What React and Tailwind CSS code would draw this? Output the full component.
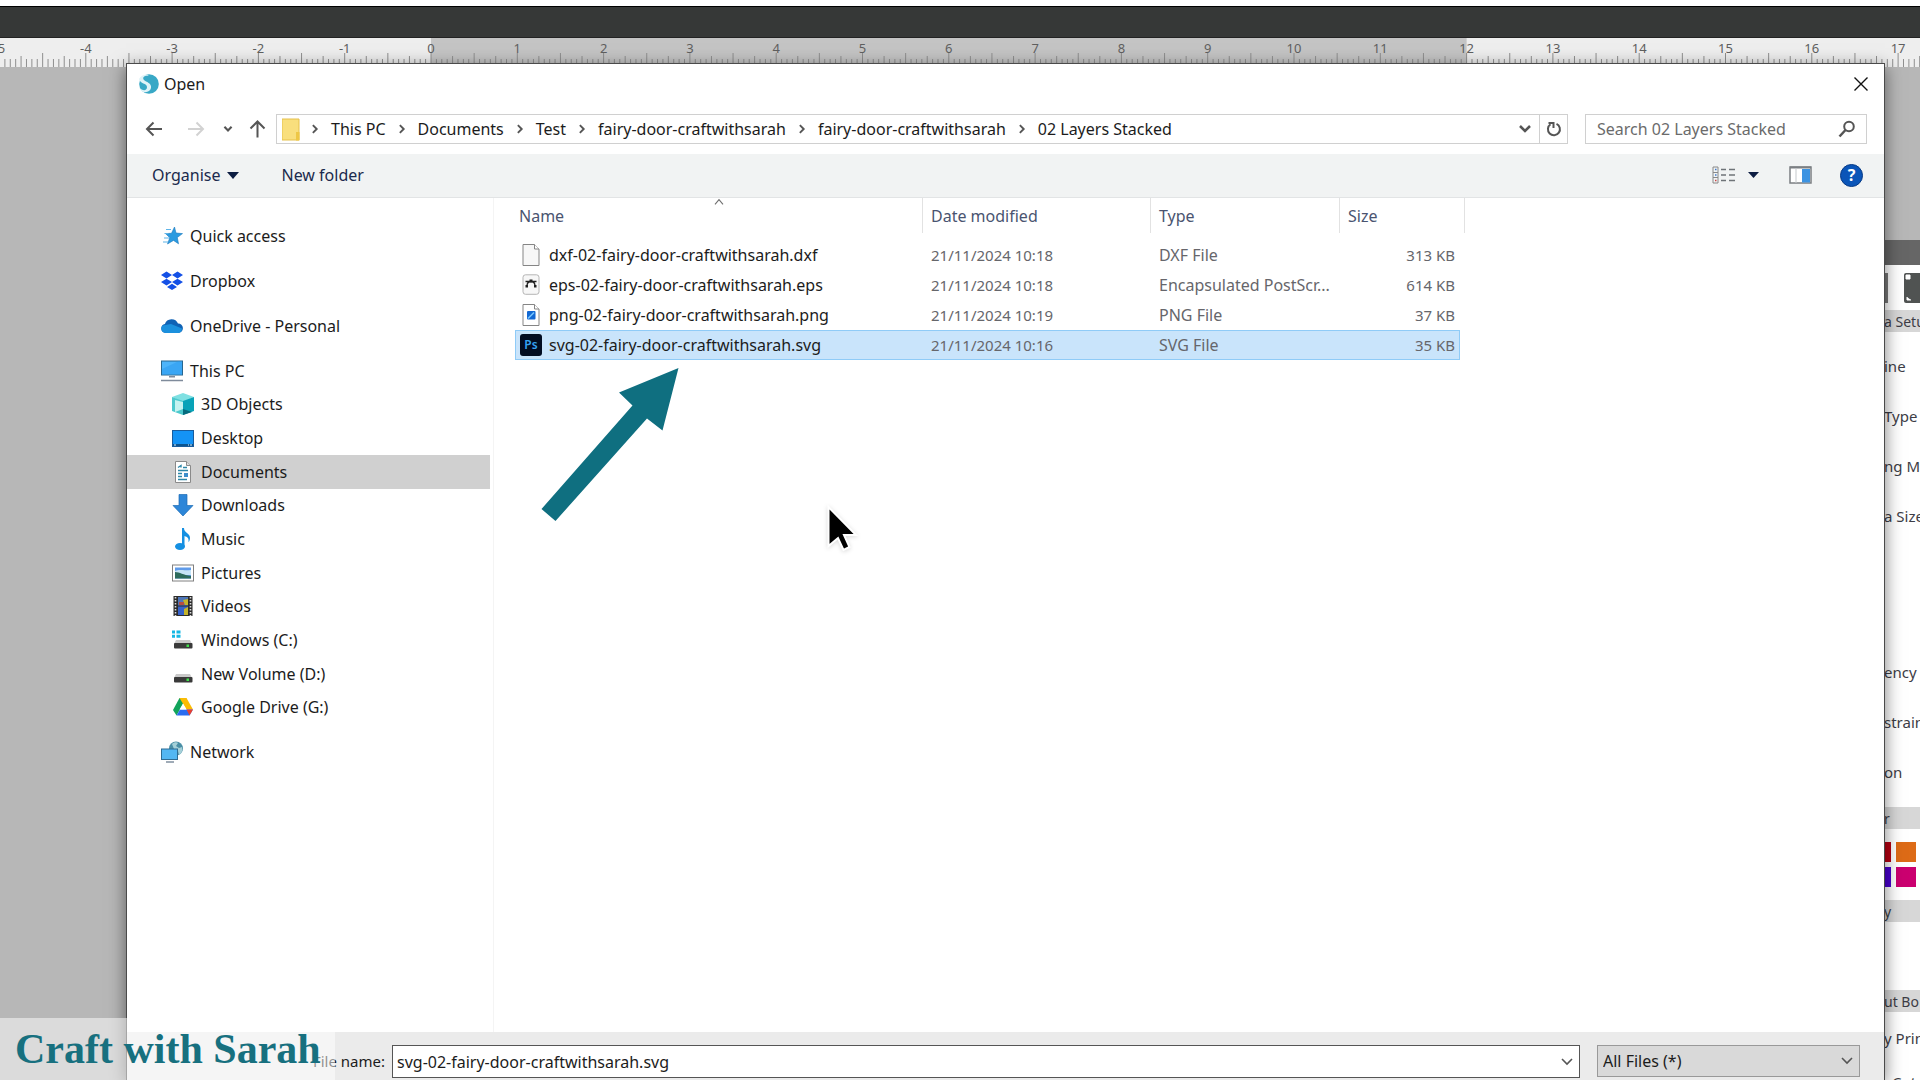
import React, { useState } from 'react';

const INCH = 86.3;
const ZERO = 431;

const files = [
  { name: 'dxf-02-fairy-door-craftwithsarah.dxf', date: '21/11/2024 10:18', type: 'DXF File', size: '313 KB', icon: 'blank' },
  { name: 'eps-02-fairy-door-craftwithsarah.eps', date: '21/11/2024 10:18', type: 'Encapsulated PostScr...', size: '614 KB', icon: 'eps' },
  { name: 'png-02-fairy-door-craftwithsarah.png', date: '21/11/2024 10:19', type: 'PNG File', size: '37 KB', icon: 'png' },
  { name: 'svg-02-fairy-door-craftwithsarah.svg', date: '21/11/2024 10:16', type: 'SVG File', size: '35 KB', icon: 'ps' },
];

const crumbs = ['This PC', 'Documents', 'Test', 'fairy-door-craftwithsarah', 'fairy-door-craftwithsarah', '02 Layers Stacked'];

const topPlaces = [
  { label: 'Quick access', icon: 'star' },
  { label: 'Dropbox', icon: 'dropbox' },
  { label: 'OneDrive - Personal', icon: 'cloud' },
];

const pcPlaces = [
  { label: '3D Objects', icon: 'cube' },
  { label: 'Desktop', icon: 'desktop' },
  { label: 'Documents', icon: 'document' },
  { label: 'Downloads', icon: 'download' },
  { label: 'Music', icon: 'music' },
  { label: 'Pictures', icon: 'picture' },
  { label: 'Videos', icon: 'video' },
  { label: 'Windows (C:)', icon: 'windrive' },
  { label: 'New Volume (D:)', icon: 'drive' },
  { label: 'Google Drive (G:)', icon: 'gdrive' },
];

const drive = (
  <>
    <path d="M4 11h14l2 4H2z" fill="#c9c9c9" />
    <rect x="2" y="14" width="18.500" height="5.500" rx="1" fill="#3a3a3a" />
    <rect x="14.500" y="15.500" width="2.500" height="2.500" fill="#3fe04a" />
  </>
);

const placeIcons = {
  star: (
    <>
      <path d="M13.500 2l1.500 6 6.500.6-5.200 3.900 1.200 6.300-5-3.400L6.500 19l2.300-6.300L4.500 8.600l6-.3z" fill="#2b9be0" stroke="#1978bd" strokeWidth=".6" />
      <path d="M5 4.500h5M3.500 8.500h4M3 13h5M2 17h5" stroke="#5fb4e8" strokeWidth="1.200" />
    </>
  ),
  dropbox: (
    <path fill="#1450e6" d="M5.500 1.500L11 5 5.500 8.400 0 5zM16.500 1.500L22 5l-5.500 3.400L11 5zM5.500 8.700L11 12.100 5.500 15.500 0 12.100zM16.500 8.700l5.500 3.400-5.500 3.400-5.500-3.400zM11 13.700l5 3.200-5 3.200-5-3.200z" />
  ),
  cloud: (
    <>
      <path d="M4.500 18a4.500 4.500 0 01-.6-8.900A7 7 0 0117 8.500a4.700 4.700 0 01.3 9.500z" fill="#0f62b5" />
      <path d="M4.500 18a4.500 4.500 0 01-3-7.600L10 9l11 4.500A4.600 4.600 0 0117.300 18z" fill="#1b90dd" />
    </>
  ),
  pc: (
    <>
      <rect x=".5" y="1" width="21" height="14" fill="#4db4fa" stroke="#28668f" />
      <path d="M1 14.500V9L17 1.500h4v13z" fill="#2f9df0" opacity=".6" />
      <path d="M8 16.700h6M0 20.500h22" stroke="#7f8b9b" strokeWidth="1.600" />
    </>
  ),
  cube: (
    <>
      <path d="M11 0l11 4-11 5L0 4z" fill="#7fe0e2" />
      <path d="M0 4l11 4v14L0 18z" fill="#4cc9cd" />
      <path d="M22 4L11 8v14l11-4z" fill="#08a3b8" />
      <path d="M3 7l8 2v7l-8 3z" fill="#c5f3f0" />
      <path d="M11 16l9 3-9 3z" fill="#066b7d" />
    </>
  ),
  desktop: (
    <>
      <rect x=".5" y="3.500" width="21" height="16" fill="#1493f5" stroke="#1a5c9c" />
      <path d="M1 18h20" stroke="#0c548f" strokeWidth="2" />
      <path d="M2 18h2M16 18h1M18 18h2" stroke="#d5efff" />
    </>
  ),
  document: (
    <>
      <path d="M3.500.5h11l4 4v17h-15z" fill="#fff" stroke="#8a8a8a" />
      <path d="M14.500.5v4h4" fill="#ddd" stroke="#8a8a8a" />
      <path d="M6 6.500l3-2v2M11 6.500h4M6 9.500h10M6 12.500h4M6 15.500h4M6 18.500h9" stroke="#2d87a8" strokeWidth="1.400" fill="none" />
      <rect x="12" y="12" width="4" height="4" fill="#3d8ecb" />
    </>
  ),
  download: <path d="M7 .5h8v11h6L11 22 1 11.500h6z" fill="#2d86d8" stroke="#1c6bb5" strokeWidth=".7" />,
  music: (
    <>
      <path d="M10 0h2c0 5 6 5 6 10 0 2-1 4-1.500 4 .5-4-1-5-4-6v10h-2.500z" fill="#1590e2" />
      <ellipse cx="8" cy="18.500" rx="5" ry="3.500" fill="#1590e2" />
    </>
  ),
  picture: (
    <>
      <rect x=".5" y="3" width="21" height="16" fill="#fff" stroke="#808080" />
      <rect x="3" y="5.500" width="16" height="11" fill="#5f9bea" />
      <path d="M3 9c5-2 8 0 16-1v5H3z" fill="#c6e4f8" />
      <path d="M3 10c5 0 8 3 16 4v2.500H3z" fill="#2d6b5c" />
    </>
  ),
  video: (
    <>
      <rect x="1.500" y="1" width="19" height="20" fill="#2b2b2b" />
      <path d="M3.500 2v19M18.500 2v19" stroke="#ddd" strokeWidth="1.600" strokeDasharray="1.500 1.500" />
      <rect x="6" y="2" width="10" height="8.500" fill="#4e76b8" />
      <rect x="6" y="11.500" width="10" height="8.500" fill="#3561c8" />
      <path d="M7 7h5v3H7z" fill="#b54b42" />
      <path d="M11 5l5-1v6h-3zM12 14l4-2v8h-4z" fill="#c4b32a" />
    </>
  ),
  windrive: (
    <>
      <path d="M0 1.500h3v3H0zM4.500 1.500h4v3h-4zM0 5.700h3v3H0zM4.500 5.700h4v3h-4z" fill="#16b8e4" />
      {drive}
    </>
  ),
  drive,
  gdrive: (
    <>
      <path d="M7.500 2h7L4.500 19.500 1 14z" fill="#12a45b" />
      <path d="M7.500 2h7L21 13.500h-6.500z" fill="#fbbc04" />
      <path d="M4.500 19.500L8 13.500h13L17.500 19.500z" fill="#2a6cf0" />
      <path d="M14.500 13.500H21l-3.500 6z" fill="#e8402f" />
      <path d="M11 7.500l3.500 6h-7z" fill="#fff" />
    </>
  ),
  network: (
    <>
      <circle cx="15" cy="7.500" r="7" fill="#4a8fa6" />
      <path d="M11 3c2-2 5-2 6-1l-2 3 3 2 3-1c1 4-1 7-3 8l-1-4-4-2z" fill="#a5d0d8" />
      <rect x=".5" y="8" width="16" height="10.500" fill="#53b7f2" stroke="#2e6c93" />
      <path d="M5 21h8" stroke="#8796a5" strokeWidth="1.600" />
    </>
  ),
};

function PlaceIcon({ name }) {
  return (
    <svg viewBox="0 0 22 22" className="size-[22px] shrink-0" aria-hidden="true">
      {placeIcons[name]}
    </svg>
  );
}

function FileIcon({ name }) {
  if (name === 'ps') {
    return (
      <span className="flex size-[22px] shrink-0 items-center justify-center rounded-[3px] bg-[#020d22] text-[12px] leading-none font-semibold text-[#35a3f5]">
        Ps
      </span>
    );
  }
  return (
    <svg viewBox="0 0 22 22" className="size-[22px] shrink-0" aria-hidden="true">
      {name === 'eps' ? (
        <>
          <rect x="3" y=".8" width="16" height="19.500" rx="2.500" fill="#f7f7f7" stroke="#b5b5b5" />
          <path d="M5.500 7.500h11M7 12c0-3 1.500-4.500 4-4.500s4 1.500 4 4.500" fill="none" stroke="#222" strokeWidth="1.300" />
          <path d="M9.500 5.500h3v3h-3zM5.500 11h2.500v2.500H5.500zM14 11h2.500v2.500H14z" fill="#222" />
        </>
      ) : (
        <>
          <path d="M3 .5h11.500L19 5v16.500H3z" fill={name === 'png' ? '#fff' : '#f7f7f7'} stroke="#858585" />
          <path d="M14.500.5V5H19" fill="#fff" stroke="#858585" />
        </>
      )}
      {name === 'png' && (
        <>
          <rect x="7" y="7" width="8.500" height="8.500" rx="1" fill="#1268d3" />
          <path d="M8 14.500l6-6" stroke="#76c6ff" strokeWidth="1.600" />
        </>
      )}
    </svg>
  );
}

function Chevron({ className, d = 'M2 4l5 5 5-5', width = 2 }) {
  return (
    <svg viewBox="0 0 14 14" className={className} fill="none" stroke="currentColor" strokeWidth={width} aria-hidden="true">
      <path d={d} />
    </svg>
  );
}

function Ruler() {
  const ticks = [];
  for (let i = -80; i <= 280; i++) {
    let top = 21;
    if (i % 4 === 0) top = 18;
    if (i % 8 === 0) top = 15;
    ticks.push(<path key={i} d={`M${ZERO + (i * INCH) / 16} ${top}V29`} />);
  }
  const labels = [];
  for (let n = -5; n <= 17; n++) labels.push(n);
  return (
    <svg className="block h-[29px] w-full shrink-0 bg-[#eeeeee]">
      <rect x={ZERO} y="0" width={INCH * 12} height="29" fill="#c4c4c4" />
      <g stroke="#8f8f8f" strokeWidth="1">{ticks}</g>
      <g fill="#5f5f5f" fontSize="13" textAnchor="middle">
        {labels.map((n) => (
          <text key={n} x={ZERO + n * INCH} y="15">{n}</text>
        ))}
      </g>
    </svg>
  );
}

function PanelHeader({ children }) {
  return <div className="h-[22px] bg-[#d7d7d7] text-[14px] leading-6">{children}</div>;
}

// Settings panel at the right of the workspace, mostly behind the dialog
function SidePanel() {
  return (
    <aside className="w-9 shrink-0 overflow-hidden bg-white text-[15px] whitespace-nowrap text-[#3d3d46]">
      <div className="h-[173px] bg-[#b7b7b7]" />
      <div className="h-[25px] bg-[#666666]" />
      <div className="flex h-[45px] items-center gap-4">
        <div className="h-[30px] w-1 shrink-0 bg-[#777777]" />
        <svg viewBox="0 0 30 30" className="size-[30px] shrink-0">
          <rect width="30" height="30" rx="2" fill="#505352" />
          <path d="M2 2h4v4H2zM3 24v3h4" fill="#fff" stroke="#fff" />
        </svg>
      </div>
      <PanelHeader>a Setu</PanelHeader>
      <div className="pt-[9px] leading-[50px]">
        <div>ine</div>
        <div>Type</div>
        <div>ng M</div>
        <div>a Size</div>
      </div>
      <div className="mt-[106px] mb-[10px] leading-[50px]">
        <div>ency</div>
        <div>strain</div>
        <div>on</div>
      </div>
      <PanelHeader>r</PanelHeader>
      <div className="grid grid-cols-[7px_20px] gap-x-[5px] gap-y-[5px] py-[13px]">
        <div className="h-5 bg-[#b80012]" />
        <div className="h-5 bg-[#dd6b17]" />
        <div className="h-5 bg-[#4a00d0]" />
        <div className="h-5 bg-[#cb0070]" />
      </div>
      <PanelHeader>y</PanelHeader>
      <div className="h-[68px]" />
      <PanelHeader>ut Bo</PanelHeader>
      <div className="pt-1 leading-[44px]">
        <div>y Prin</div>
        <div className="pl-2">Cut</div>
      </div>
    </aside>
  );
}

function AddressRow() {
  return (
    <div className="flex h-[30px] items-center pr-[17px] pl-[18px]">
      <div className="flex w-[131px] shrink-0 items-center text-[#555555]">
        <button aria-label="Back" className="mr-6 w-[18px]">
          <svg viewBox="0 0 18 18" className="size-[18px]" fill="none" stroke="currentColor" strokeWidth="2"><path d="M17 9H2M8.500 2.500L2 9l6.500 6.500" /></svg>
        </button>
        <button aria-label="Forward" className="mr-[18px] w-[18px] text-[#d2d2d2]">
          <svg viewBox="0 0 18 18" className="size-[18px]" fill="none" stroke="currentColor" strokeWidth="2"><path d="M1 9h15M9.500 2.500L16 9l-6.500 6.500" /></svg>
        </button>
        <button aria-label="Recent locations" className="mr-4">
          <Chevron className="size-[10px]" width={3} />
        </button>
        <button aria-label="Up">
          <svg viewBox="0 0 18 18" className="size-[18px]" fill="none" stroke="currentColor" strokeWidth="2"><path d="M8.500 17.500V2M1.500 8.500l7-7 7 7" /></svg>
        </button>
      </div>
      <div className="flex h-[30px] min-w-0 flex-1 items-center border border-[#d0d0d0] pl-[5px]">
        <svg viewBox="0 0 18 23" className="mr-[9px] h-[23px] w-[18px] shrink-0">
          <path d="M0 1h17v21H0z" fill="#f9df7d" stroke="#e6c14d" />
          <path d="M14 14h3.500v8.500H14z" fill="#eec746" />
        </svg>
        <nav className="flex min-w-0 flex-1 items-center whitespace-nowrap">
          {crumbs.map((c, i) => (
            <React.Fragment key={i}>
              <Chevron className="mr-[10px] size-3 shrink-0 text-[#555555]" d="M4.500 2.500L9 7l-4.500 4.500" width={2.2} />
              <a href="#" className="mr-[10px]">{c}</a>
            </React.Fragment>
          ))}
        </nav>
        <button aria-label="Previous locations" className="mr-[7px] text-[#555555]"><Chevron className="size-[14px]" width={2.5} /></button>
        <button aria-label="Refresh" className="flex h-full w-7 items-center justify-center border-l border-[#d0d0d0] text-[#555555]">
          <svg viewBox="0 0 16 16" className="size-4" fill="none" stroke="currentColor" strokeWidth="2">
            <path d="M10.500 2.800a6 6 0 11-6 .5M2.500 2h5v5" />
          </svg>
        </button>
      </div>
      <label className="ml-[17px] flex h-[30px] w-[282px] shrink-0 items-center border border-[#d0d0d0] pr-[10px] pl-[11px]">
        <input aria-label="Search" placeholder="Search 02 Layers Stacked" className="min-w-0 flex-1 outline-none placeholder:text-[#6b6b6b]" />
        <svg viewBox="0 0 18 18" className="size-[18px]" fill="none" stroke="#555555" strokeWidth="2">
          <circle cx="11" cy="6.500" r="4.800" />
          <path d="M7.500 10L1.500 16.500" strokeWidth="2.500" />
        </svg>
      </label>
    </div>
  );
}

function Toolbar() {
  return (
    <div className="mt-[10px] flex h-11 items-center border-b border-[#e2e4e5] bg-[#f1f3f3] pr-[21px] pb-px pl-[25px] text-[#1b2a4d]">
      <button className="flex items-center gap-[7px]">
        Organise
        <svg viewBox="0 0 12 7" className="h-[7px] w-3"><path d="M0 0h12L6 7z" fill="#0d1d42" /></svg>
      </button>
      <button className="ml-[42px]">New folder</button>
      <button aria-label="Change view" className="ml-auto">
        <svg viewBox="0 0 24 18" className="h-[18px] w-6" fill="none">
          <path d="M1 1h5v16H1zM1 6.500h5M1 11.500h5" stroke="#888" />
          <path d="M3 3.500h1.500M3 9h1.500" stroke="#3f78c9" strokeWidth="1.500" />
          <path d="M3 14.500h1.500" stroke="#c44" strokeWidth="1.500" />
          <path d="M9 3.500h5M17 3.500h6M9 9h5M17 9h6M9 14.500h5M17 14.500h6" stroke="#6f7478" strokeWidth="1.300" />
        </svg>
      </button>
      <button aria-label="More views" className="ml-3">
        <svg viewBox="0 0 11 6" className="h-1.5 w-[11px]"><path d="M0 0h11L5.500 6z" fill="#0d1d42" /></svg>
      </button>
      <button aria-label="Preview pane" className="ml-[30px]">
        <svg viewBox="0 0 23 18" className="h-[18px] w-[23px]">
          <rect x="1" y="1" width="21" height="16" fill="#fff" stroke="#7b7f83" strokeWidth="1.500" />
          <path d="M1 1.500h21" stroke="#7b7f83" strokeWidth="2" />
          <path d="M7 2v15" stroke="#c5c9cc" />
          <rect x="13" y="3" width="8" height="13.500" fill="#3c93e2" />
        </svg>
      </button>
      <button aria-label="Help" className="ml-7 flex size-[23px] items-center justify-center rounded-full border border-[#063a86] bg-[#0b55b8] leading-none font-bold text-white">
        ?
      </button>
    </div>
  );
}

function Places() {
  return (
    <aside className="w-[367px] shrink-0 border-r border-[#f4f4f4] pt-[21px] pr-[3px]">
      <div className="flex flex-col gap-[11px]">
        {topPlaces.map((p) => (
          <a key={p.label} href="#" className="flex h-[34px] items-center gap-[7px] pl-[34px]">
            <PlaceIcon name={p.icon} />
            {p.label}
          </a>
        ))}
        <div className="flex h-[370px] flex-col">
          <a href="#" className="flex flex-1 items-center gap-[7px] pl-[34px]">
            <PlaceIcon name="pc" />
            This PC
          </a>
          {pcPlaces.map((p) => (
            <a
              key={p.label}
              href="#"
              className={`flex flex-1 items-center gap-[7px] pl-[45px] ${p.label === 'Documents' ? 'bg-[#d0d0d0]' : ''}`}
            >
              <PlaceIcon name={p.icon} />
              {p.label}
            </a>
          ))}
        </div>
        <a href="#" className="flex h-[34px] items-center gap-[7px] pl-[34px]">
          <PlaceIcon name="network" />
          Network
        </a>
      </div>
    </aside>
  );
}

function FileTable({ selected, onSelect }) {
  return (
    <table className="ml-[21px] w-[950px] table-fixed border-separate border-spacing-0 self-start text-left">
      <colgroup>
        <col className="w-[408px]" />
        <col className="w-[228px]" />
        <col className="w-[189px]" />
        <col className="w-[120px]" />
        <col className="w-[5px]" />
      </colgroup>
      <thead className="text-[#4a5470]">
        <tr className="h-[35px]">
          <th className="relative border-r border-[#e2e2e2] pl-1 font-normal">
            Name
            <Chevron className="absolute top-0 left-1/2 h-2 w-3 -translate-x-1/2 text-[#707070]" d="M0 11l7-8 7 8" />
          </th>
          <th className="border-r border-[#e2e2e2] pl-2 font-normal">Date modified</th>
          <th className="border-r border-[#e2e2e2] pl-2 font-normal">Type</th>
          <th colSpan={2} className="border-r border-[#e2e2e2] pl-2 font-normal">Size</th>
        </tr>
      </thead>
      <tbody className="text-[#66666b] before:block before:h-[7px]">
        {files.map((f) => {
          const on = f.name === selected;
          const cell = on ? 'border-y border-[#8fcbf7] bg-[#c9e4fb]' : 'border-y border-transparent';
          return (
            <tr key={f.name} className="h-[30px]" onClick={() => onSelect(f.name)}>
              <td className={`${cell} border-l pl-1`}>
                <div className="flex items-center gap-[7px] text-[#1c1c1c]">
                  <FileIcon name={f.icon} />
                  {f.name}
                </div>
              </td>
              <td className={`${cell} pl-2 text-[15px]`}>{f.date}</td>
              <td className={`${cell} pl-2 whitespace-nowrap`}>{f.type}</td>
              <td className={`${cell} border-r pr-1 text-right text-[15px]`}>{f.size}</td>
              <td></td>
            </tr>
          );
        })}
      </tbody>
    </table>
  );
}

function App() {
  const [selected, setSelected] = useState(files[3].name);

  return (
    <div className="relative flex h-screen flex-col overflow-hidden bg-[#b7b7b7] font-['Noto_Sans',sans-serif] text-[16px] leading-5 text-[#1c1c1c]">
      {/* Workspace behind the dialog */}
      <div className="h-1.5 shrink-0 bg-white" />
      <div className="h-8 shrink-0 border-y border-t-black border-b-[#222222] bg-[#363837]" />
      <Ruler />
      <div className="flex min-h-0 flex-1 justify-end">
        <SidePanel />
      </div>

      {/* Open dialog */}
      <div role="dialog" aria-label="Open" className="absolute top-[63px] right-[35px] bottom-0 left-[126px] flex flex-col border-x border-t border-[#4a4a4a] bg-white shadow-[0_4px_16px_rgba(0,0,0,0.5)]">
        <div className="flex h-[50px] shrink-0 items-center pr-4 pb-[10px] pl-3">
          <svg viewBox="0 0 20 20" className="size-5">
            <circle cx="10" cy="10" r="9.800" fill="#38a8c6" />
            <path d="M0 5c3-5 8-5 10-3-5-1-7 2-5 4s8 3 7 8-9 6-12 0c4 3 8 3 8-1S1 10 0 5z" fill="#dff3f8" />
          </svg>
          <h1 className="ml-[5px]">Open</h1>
          <button aria-label="Close" className="ml-auto">
            <svg viewBox="0 0 14 14" className="size-[14px]" stroke="#111" strokeWidth="1.400"><path d="M.5.5l13 13M13.500.5l-13 13" /></svg>
          </button>
        </div>
        <AddressRow />
        <Toolbar />
        <div className="flex min-h-0 flex-1">
          <Places />
          <FileTable selected={selected} onSelect={setSelected} />
        </div>
        <div className="flex h-12 shrink-0 items-start bg-[#ebebeb] pt-[13px] pr-6">
          <label htmlFor="file-name" className="w-[258px] shrink-0 text-right text-[15px] leading-[33px]">File name:</label>
          <div className="ml-[7px] flex h-[33px] flex-1 items-center border border-[#555555] bg-white pr-[5px] pl-1">
            <input id="file-name" value={selected} readOnly className="min-w-0 flex-1 outline-none" />
            <button aria-label="File history" className="text-[#555555]"><Chevron className="size-[14px]" width={1.6} /></button>
          </div>
          <div className="relative ml-[17px] w-[263px] shrink-0 text-[#1c1c1c]">
            <select aria-label="File type" className="h-8 w-full appearance-none border border-[#999999] bg-[#d9d9d9] pl-[5px]">
              <option>All Files (*)</option>
            </select>
            <Chevron className="pointer-events-none absolute top-[9px] right-[6px] size-[14px] text-[#555555]" width={1.6} />
          </div>
        </div>
      </div>

      {/* Annotation arrow */}
      <svg viewBox="0 0 138 155" className="pointer-events-none absolute top-[367px] left-[541px] h-[155px] w-[138px]">
        <path d="M137.500 1L78 25.500l13.500 13L.5 142l14 12L106 51.500l15.500 12z" fill="#0f6f80" />
      </svg>

      {/* Mouse pointer */}
      <svg viewBox="0 0 34 50" className="pointer-events-none absolute top-[503px] left-[826px] h-[50px] w-[34px] drop-shadow-sm">
        <path d="M2.500 4v39l9.500-8 5.500 12 6-3-5.500-12h12z" fill="#000" stroke="#fff" strokeWidth="2" />
      </svg>

      {/* Watermark */}
      <div className="absolute bottom-0 left-0 flex h-[62px] w-[335px] items-center bg-white/50 pl-[15px] font-['Liberation_Serif',serif] text-[42px] leading-none font-bold whitespace-nowrap text-[#17707f]">
        Craft with Sarah
      </div>
    </div>
  );
}

export default App;
